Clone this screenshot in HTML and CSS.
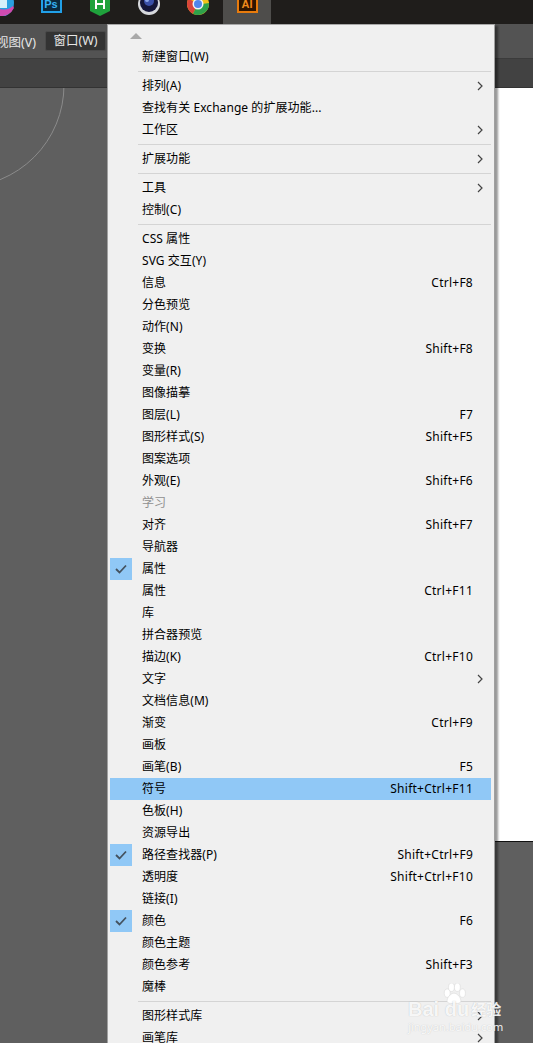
FILE: index.html
```html
<!DOCTYPE html>
<html lang="zh-CN">
<head>
<meta charset="utf-8">
<title>窗口菜单</title>
<link rel="stylesheet" href="styles.css">
</head>
<body>
<div class="app">
  <header class="taskbar">
    <div class="task task-first"><svg width="14" height="16" viewBox="0 0 14 16"><circle cx="0" cy="3" r="14" fill="#2a9fe0"/><path d="M0 9a14 14 0 0 0 13-3l1 2A14 14 0 0 1 0 16z" fill="#d04bb0"/><rect x="0" y="0" width="7" height="8" fill="#d8f0fa"/></svg></div>
    <div class="task task-ps"><span class="ps">Ps</span></div>
    <div class="task task-h"><svg width="20" height="16" viewBox="0 0 20 16"><path d="M0 0h20v11l-2 1-8 4-8-4-2-1z" fill="#1fa23c"/><path d="M6 0v9M14 0v9M6 4h8" stroke="#fff" stroke-width="2" fill="none"/></svg></div>
    <div class="task task-c4d"><svg width="22" height="16" viewBox="0 0 22 16"><circle cx="11" cy="4" r="11" fill="#d6d8dc"/><circle cx="11" cy="3" r="9" fill="#15163a"/><circle cx="11" cy="1" r="5" fill="#3a4fa8"/><circle cx="9" cy="0" r="2" fill="#8fa8ea"/></svg></div>
    <div class="task task-chrome"><svg width="22" height="16" viewBox="0 0 22 16"><circle cx="11" cy="4" r="11" fill="#f2c21a"/><path d="M11 4 1.500 -1.500A11 11 0 0 0 6 13.800z" fill="#d9453a"/><path d="M11 4 6 13.800A11 11 0 0 0 21.900 3z" fill="#2fa24b"/><path d="M11 4 21.900 3 18 -4z" fill="#f2c21a"/><circle cx="11" cy="4" r="5.500" fill="#f4f4f4"/><circle cx="11" cy="4" r="4" fill="#4f86ec"/></svg></div>
    <div class="task task-ai"><span class="ai">AI</span></div>
  </header>
  <nav class="toolbar">
    <span class="tool tool-view">视图(V)</span>
    <span class="tool tool-active">窗口(W)</span>
  </nav>
  <div class="tabbar"></div>
  <main class="workspace">
    <svg class="arc" width="107" height="120" viewBox="0 0 107 120"><circle cx="-38" cy="-3" r="102" fill="none" stroke="#8b8b8b" stroke-width="1"/></svg>
    <div class="doc"></div>
  </main>
</div>

<section class="menu">
  <div class="menu-top"><span class="up"></span></div>
  <div class="row"><span class="mark"></span><span class="label">新建窗口(W)</span></div>
  <hr class="sep">
  <div class="row"><span class="mark"></span><span class="label">排列(A)</span><svg class="more" width="6" height="10" viewBox="0 0 6 10"><path d="M1 1l4 4-4 4" fill="none" stroke="#444" stroke-width="1.200"/></svg></div>
  <div class="row"><span class="mark"></span><span class="label">查找有关 Exchange 的扩展功能...</span></div>
  <div class="row"><span class="mark"></span><span class="label">工作区</span><svg class="more" width="6" height="10" viewBox="0 0 6 10"><path d="M1 1l4 4-4 4" fill="none" stroke="#444" stroke-width="1.200"/></svg></div>
  <hr class="sep">
  <div class="row"><span class="mark"></span><span class="label">扩展功能</span><svg class="more" width="6" height="10" viewBox="0 0 6 10"><path d="M1 1l4 4-4 4" fill="none" stroke="#444" stroke-width="1.200"/></svg></div>
  <hr class="sep">
  <div class="row"><span class="mark"></span><span class="label">工具</span><svg class="more" width="6" height="10" viewBox="0 0 6 10"><path d="M1 1l4 4-4 4" fill="none" stroke="#444" stroke-width="1.200"/></svg></div>
  <div class="row"><span class="mark"></span><span class="label">控制(C)</span></div>
  <hr class="sep">
  <div class="row"><span class="mark"></span><span class="label">CSS 属性</span></div>
  <div class="row"><span class="mark"></span><span class="label">SVG 交互(Y)</span></div>
  <div class="row"><span class="mark"></span><span class="label">信息</span><span class="key">Ctrl+F8</span></div>
  <div class="row"><span class="mark"></span><span class="label">分色预览</span></div>
  <div class="row"><span class="mark"></span><span class="label">动作(N)</span></div>
  <div class="row"><span class="mark"></span><span class="label">变换</span><span class="key">Shift+F8</span></div>
  <div class="row"><span class="mark"></span><span class="label">变量(R)</span></div>
  <div class="row"><span class="mark"></span><span class="label">图像描摹</span></div>
  <div class="row"><span class="mark"></span><span class="label">图层(L)</span><span class="key">F7</span></div>
  <div class="row"><span class="mark"></span><span class="label">图形样式(S)</span><span class="key">Shift+F5</span></div>
  <div class="row"><span class="mark"></span><span class="label">图案选项</span></div>
  <div class="row"><span class="mark"></span><span class="label">外观(E)</span><span class="key">Shift+F6</span></div>
  <div class="row disabled"><span class="mark"></span><span class="label">学习</span></div>
  <div class="row"><span class="mark"></span><span class="label">对齐</span><span class="key">Shift+F7</span></div>
  <div class="row"><span class="mark"></span><span class="label">导航器</span></div>
  <div class="row"><span class="mark on"><svg width="12" height="10" viewBox="0 0 12 10"><path d="M1 5l3.500 3.500L11 1.500" fill="none" stroke="#44525f" stroke-width="1.800"/></svg></span><span class="label">属性</span></div>
  <div class="row"><span class="mark"></span><span class="label">属性</span><span class="key">Ctrl+F11</span></div>
  <div class="row"><span class="mark"></span><span class="label">库</span></div>
  <div class="row"><span class="mark"></span><span class="label">拼合器预览</span></div>
  <div class="row"><span class="mark"></span><span class="label">描边(K)</span><span class="key">Ctrl+F10</span></div>
  <div class="row"><span class="mark"></span><span class="label">文字</span><svg class="more" width="6" height="10" viewBox="0 0 6 10"><path d="M1 1l4 4-4 4" fill="none" stroke="#444" stroke-width="1.200"/></svg></div>
  <div class="row"><span class="mark"></span><span class="label">文档信息(M)</span></div>
  <div class="row"><span class="mark"></span><span class="label">渐变</span><span class="key">Ctrl+F9</span></div>
  <div class="row"><span class="mark"></span><span class="label">画板</span></div>
  <div class="row"><span class="mark"></span><span class="label">画笔(B)</span><span class="key">F5</span></div>
  <div class="row hot"><span class="mark"></span><span class="label">符号</span><span class="key">Shift+Ctrl+F11</span></div>
  <div class="row"><span class="mark"></span><span class="label">色板(H)</span></div>
  <div class="row"><span class="mark"></span><span class="label">资源导出</span></div>
  <div class="row"><span class="mark on"><svg width="12" height="10" viewBox="0 0 12 10"><path d="M1 5l3.500 3.500L11 1.500" fill="none" stroke="#44525f" stroke-width="1.800"/></svg></span><span class="label">路径查找器(P)</span><span class="key">Shift+Ctrl+F9</span></div>
  <div class="row"><span class="mark"></span><span class="label">透明度</span><span class="key">Shift+Ctrl+F10</span></div>
  <div class="row"><span class="mark"></span><span class="label">链接(I)</span></div>
  <div class="row"><span class="mark on"><svg width="12" height="10" viewBox="0 0 12 10"><path d="M1 5l3.500 3.500L11 1.500" fill="none" stroke="#44525f" stroke-width="1.800"/></svg></span><span class="label">颜色</span><span class="key">F6</span></div>
  <div class="row"><span class="mark"></span><span class="label">颜色主题</span></div>
  <div class="row"><span class="mark"></span><span class="label">颜色参考</span><span class="key">Shift+F3</span></div>
  <div class="row"><span class="mark"></span><span class="label">魔棒</span></div>
  <hr class="sep">
  <div class="row"><span class="mark"></span><span class="label">图形样式库</span><svg class="more" width="6" height="10" viewBox="0 0 6 10"><path d="M1 1l4 4-4 4" fill="none" stroke="#444" stroke-width="1.200"/></svg></div>
  <div class="row"><span class="mark"></span><span class="label">画笔库</span><svg class="more" width="6" height="10" viewBox="0 0 6 10"><path d="M1 1l4 4-4 4" fill="none" stroke="#444" stroke-width="1.200"/></svg></div>
</section>

<aside class="mark-baidu">
  <svg class="paw" width="30" height="22" viewBox="0 0 32 26"><g fill="#fff" stroke="#d6d6d6" stroke-width="0.600"><ellipse cx="8" cy="12" rx="3.500" ry="5"/><ellipse cx="13" cy="5" rx="3.500" ry="5"/><ellipse cx="20" cy="5" rx="3.500" ry="5"/><ellipse cx="26" cy="12" rx="3.500" ry="5"/><path d="M16 12c4 0 9 6 8 10-1 3-5 2-8 2s-7 1-8-2c-1-4 4-10 8-10z"/></g></svg>
  <div class="brand"><span class="brand-en">Bai du</span><span class="brand-cn">经验</span></div>
  <div class="brand-url">jingyan.baidu.com</div>
</aside>
</body>
</html>
```
FILE: styles.css
```css
html, body {
  margin: 0;
  height: 100%;
  overflow: hidden;
}
body {
  background: #5f5f5f;
  font-family: "Noto Sans", "Noto Sans CJK SC", sans-serif;
  font-size: 12px;
  color: #000;
}
.app {
  display: flex;
  flex-direction: column;
  height: 1043px;
}
.taskbar {
  flex: none;
  height: 24px;
  background: #1f1d1b;
  display: flex;
  overflow: hidden;
}
.task {
  flex: none;
  display: flex;
  justify-content: center;
  align-items: flex-start;
  height: 24px;
}
.task-first { width: 14px; margin-right: 26px; }
.task-ps { width: 22px; margin-right: 28px; }
.task-h { width: 20px; margin-right: 28px; }
.task-c4d { width: 22px; margin-right: 27px; }
.task-chrome { width: 22px; margin-right: 14px; }
.task-ai { width: 48px; background: #4e4d4b; }
.ps, .ai {
  display: block;
  box-sizing: border-box;
  width: 21px;
  height: 13px;
  border: 2px solid #21a0e8;
  border-top: 0;
  background: #0b2a3f;
  color: #35b2f5;
  font: 700 11px/9px "Liberation Sans", sans-serif;
  text-align: center;
}
.ai {
  border-color: #e87b0c;
  background: #2f1500;
  color: #f08a1c;
}
.toolbar {
  flex: none;
  box-sizing: border-box;
  height: 35px;
  background: #535353;
  border-bottom: 1px solid #3b3b3b;
  display: flex;
  align-items: center;
  color: #e6e6e6;
  font-size: 12.500px;
}
.tool-view {
  flex: none;
  margin-left: -4px;
  width: 49px;
}
.tool-active {
  box-sizing: border-box;
  width: 61px;
  height: 20px;
  line-height: 18px;
  text-align: center;
  background: #333;
  border: 1px solid #4a4a4a;
  border-radius: 2px;
}
.tabbar {
  flex: none;
  box-sizing: border-box;
  height: 29px;
  background: #424242;
  border-bottom: 1px solid #333;
}
.workspace {
  flex: 1;
  background: #5f5f5f;
  display: flex;
  justify-content: flex-end;
  align-items: flex-start;
  position: relative;
}
.arc {
  position: absolute;
  left: 0;
  top: 0;
}
.doc {
  width: 39px;
  height: 753px;
  background: #fff;
  border-bottom: 1px solid #111;
}
.menu {
  position: absolute;
  left: 107px;
  top: 24px;
  box-sizing: border-box;
  width: 388px;
  height: 1019px;
  overflow: hidden;
  padding: 0 3px 0 2px;
  background: #f0f0f0;
  border-left: 1px solid #a0a0a0;
  border-top: 1px solid #a8a8a8;
  border-right: 1px solid #a0a0a0;
  box-shadow: 3px 2px 2px rgba(0, 0, 0, 0.4);
}
.menu-top {
  height: 21px;
  position: relative;
}
.up {
  position: absolute;
  left: 20px;
  top: 8px;
  width: 0;
  height: 0;
  border-left: 6px solid transparent;
  border-right: 6px solid transparent;
  border-bottom: 6px solid #a9a9a9;
}
.row {
  display: flex;
  align-items: center;
  height: 22px;
  padding-right: 18px;
  line-height: 22px;
  white-space: nowrap;
}
.mark {
  flex: none;
  width: 22px;
  height: 22px;
  display: flex;
  align-items: center;
  justify-content: center;
}
.mark.on { background: #90c8f6; }
.label {
  margin-left: 10px;
  letter-spacing: 0.060px;
}
.key {
  margin-left: auto;
  letter-spacing: 0.250px;
}
.more {
  margin-left: auto;
  margin-right: -10px;
}
.hot { background: #90c8f6; }
.disabled { color: #8f8f8f; }
.sep {
  height: 1px;
  margin: 3px 0 3px 28px;
  border: 0;
  background: #d4d4d4;
}
.mark-baidu {
  position: absolute;
  left: 408px;
  top: 983px;
  width: 125px;
  height: 60px;
  color: rgba(255, 255, 255, 0.9);
  text-align: left;
  pointer-events: none;
}
.paw {
  display: block;
  margin-left: 31px;
}
.brand {
  margin-top: -6px;
  display: flex;
  align-items: center;
  gap: 2px;
  font: 700 20px/20px "Liberation Sans", sans-serif;
  text-shadow: 0 0 1px rgba(120, 120, 120, 0.45);
}
.brand-cn {
  font: 700 15px/20px "Noto Sans CJK SC", sans-serif;
}
.brand-url {
  margin-top: 2px;
  font: 400 11px/12px "Noto Sans", sans-serif;
  text-shadow: 0 0 1px rgba(120, 120, 120, 0.4);
}
```
